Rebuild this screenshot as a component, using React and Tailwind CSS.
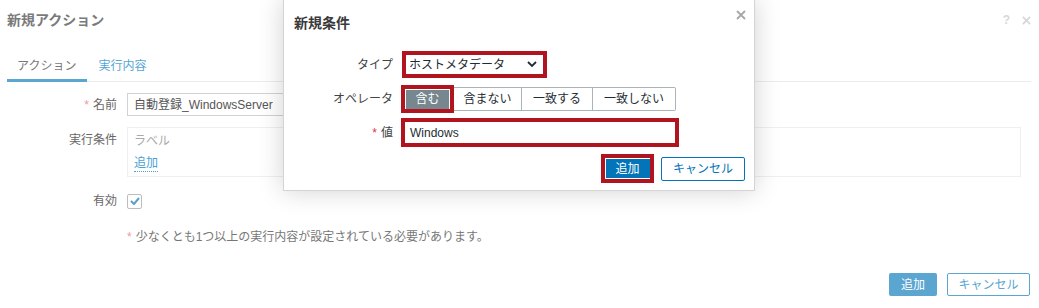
import React from "react";

const font = "font-['Liberation_Sans','Noto_Sans_CJK_JP',sans-serif]";

function Check() {
  return (
    <svg width="10" height="8" viewBox="0 0 10 8">
      <polyline points="1,4 4,7 9,1" fill="none" stroke="#5aa0cc" strokeWidth="2" />
    </svg>
  );
}

function Chevron() {
  return (
    <svg width="10" height="7" viewBox="0 0 10 7">
      <polyline points="1,1 5,5 9,1" fill="none" stroke="#1f2c33" strokeWidth="1.8" />
    </svg>
  );
}

function XIcon({ color, size = 10 }) {
  return (
    <svg width={size} height={size} viewBox="0 0 10 10">
      <path d="M1 1 L9 9 M9 1 L1 9" stroke={color} strokeWidth="1.8" />
    </svg>
  );
}

export default function App() {
  return (
    <div className={`relative w-[1039px] h-[308px] overflow-hidden bg-white ${font}`}>
      {/* background dialog (dimmed) */}
      <div className="flex flex-col">
        <div className="h-[40px] flex items-center justify-between pl-[7px] pr-[8px]">
          <span className="text-[14px] font-bold text-[#7a7a7a]">新規アクション</span>
          <div className="flex items-center gap-[12px] text-[#d8d8d8]">
            <span className="text-[12px] font-bold">?</span>
            <XIcon color="#d6d6d6" size={9} />
          </div>
        </div>
        <div className="ml-[7px] mr-[8px] flex border-b border-[#ececec] text-[12px]">
          <div className="pl-[10px] pr-[11px] pt-[18px] pb-[5px] border-b-[3px] border-[#5aa6d1] text-[#777] leading-[16px] -mb-px">アクション</div>
          <div className="pl-[11px] pt-[18px] pb-[5px] text-[#55a5d6] leading-[16px]">実行内容</div>
        </div>

        <div className="mt-[11px] flex flex-col text-[12px]">
          <div className="flex items-center gap-[10px]">
            <div className="w-[117px] text-right text-[#666]"><span className="text-[#ee9a9a] mr-[4px]">*</span>名前</div>
            <div className="h-[23px] w-[460px] border border-[#d2d2d2] flex items-center pl-[6px] text-[#555]">自動登録_WindowsServer</div>
          </div>
          <div className="mt-[11px] flex items-start gap-[10px]">
            <div className="w-[117px] text-right text-[#666] pt-[4px]">実行条件</div>
            <div className="h-[50px] w-[894px] border border-[#efefef] pl-[6px] pt-[5px] flex flex-col items-start">
              <span className="text-[#aaa] leading-[16px]">ラベル</span>
              <span className="mt-[6px] text-[#4a9fd5] leading-[16px] border-b border-dotted border-[#4a9fd5]">追加</span>
            </div>
          </div>
          <div className="mt-[15px] flex items-center gap-[10px]">
            <div className="w-[117px] text-right text-[#666]">有効</div>
            <div className="w-[15px] h-[15px] border border-[#bdbdbd] rounded-[2px] flex items-center justify-center"><Check /></div>
          </div>
          <div className="mt-[18px] pl-[127px] text-[#777]">
            <span className="text-[#ee9a9a] mr-[4px]">*</span>少なくとも1つ以上の実行内容が設定されている必要があります。
          </div>
          <div className="mt-[27px] flex justify-end gap-[10px] pr-[9px]">
            <div className="h-[23px] w-[48px] rounded-[2px] bg-[#5ba5d1] text-white flex items-center justify-center">追加</div>
            <div className="h-[23px] w-[83px] rounded-[2px] border border-[#5ba5d1] text-[#5ba5d1] flex items-center justify-center">キャンセル</div>
          </div>
        </div>
      </div>

      {/* modal */}
      <div className="absolute left-[283px] top-[-1px] w-[472px] h-[192px] bg-white border border-[#d4d4d4] shadow-[0_0_24px_rgba(0,0,0,0.18)] flex flex-col">
        <div className="h-[44px] flex items-center justify-between pl-[10px] pr-[8px]">
          <span className="text-[14px] font-bold text-[#3a3a3a] mt-[2px]">新規条件</span>
          <div className="self-start mt-[10px]"><XIcon color="#a7a7a7" size={10} /></div>
        </div>
        <div className="flex flex-col text-[12px] text-[#1f2c33]">
          <div className="flex items-center mt-[7px]">
            <div className="w-[109px] text-right text-[#444]">タイプ</div>
            <div className="ml-[9px] w-[145px] h-[27px] border-[4px] border-[#b0151f] bg-white flex items-center justify-between pl-[3px] pr-[6px]">
              <span>ホストメタデータ</span>
              <Chevron />
            </div>
          </div>
          <div className="flex items-center mt-[7px]">
            <div className="w-[109px] text-right text-[#444]">オペレータ</div>
            <div className="ml-[8px] flex items-center">
              <div className="w-[53px] h-[28px] border-[4px] border-[#b0151f] flex items-center justify-center">
                <div className="w-[43px] h-[19px] bg-[#76878f] text-white flex items-center justify-center">含む</div>
              </div>
              <div className="h-[24px] w-[68px] border border-l-0 border-[#aab3b8] flex items-center justify-center">含まない</div>
              <div className="h-[24px] w-[71px] border border-l-0 border-[#aab3b8] flex items-center justify-center">一致する</div>
              <div className="h-[24px] w-[83px] border border-l-0 border-[#aab3b8] rounded-r-[2px] flex items-center justify-center">一致しない</div>
            </div>
          </div>
          <div className="flex items-center mt-[5px]">
            <div className="w-[109px] text-right text-[#444]"><span className="text-[#e0333f] mr-[4px]">*</span>値</div>
            <div className="ml-[8px] w-[278px] h-[29px] border-[4px] border-[#b0151f] bg-white flex items-center pl-[5px]">Windows</div>
          </div>
          <div className="flex items-center justify-end mt-[7px] pr-[9px] gap-[7px]">
            <div className="w-[53px] h-[29px] border-[4px] border-[#b0151f] flex items-center justify-center">
              <div className="w-[44px] h-[19px] bg-[#0275b8] text-white flex items-center justify-center">追加</div>
            </div>
            <div className="w-[84px] h-[24px] border border-[#0275b8] rounded-[2px] text-[#0275b8] flex items-center justify-center">キャンセル</div>
          </div>
        </div>
      </div>
    </div>
  );
}
